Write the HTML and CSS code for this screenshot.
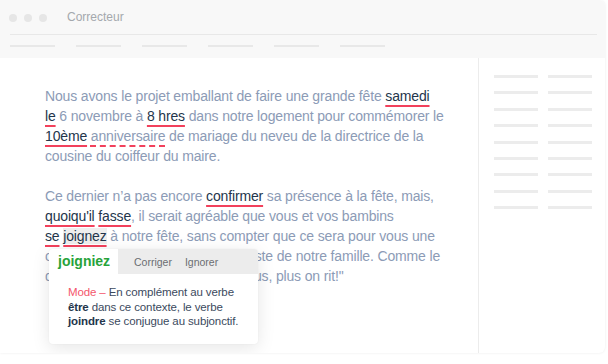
FILE: index.html
```html
<!DOCTYPE html>
<html lang="fr">
<head>
<meta charset="utf-8">
<title>Correcteur</title>
<link rel="stylesheet" href="styles.css">
</head>
<body>
<div class="window">
  <header class="titlebar">
    <div class="dots"><span class="dot"></span><span class="dot"></span><span class="dot"></span></div>
    <div class="title">Correcteur</div>
  </header>
  <div class="toolbar">
    <span class="tool"></span><span class="tool"></span><span class="tool"></span><span class="tool"></span><span class="tool"></span><span class="tool"></span>
  </div>
  <div class="body">
    <main class="editor">
      <p class="para">Nous avons le projet emballant de faire une grande fête <span class="err">samedi</span><br><span class="err">le</span> 6 novembre à <span class="err">8 hres</span> dans notre logement pour commémorer le<br><span class="err">10ème</span> <span class="warn">anniversaire</span> de mariage du neveu de la directrice de la<br>cousine du coiffeur du maire.</p>
      <p class="para">Ce dernier n’a pas encore <span class="err">confirmer</span> sa présence à la fête, mais,<br><span class="err">quoiqu'il</span> <span class="err">fasse</span>, il serait agréable que vous et vos bambins<br><span class="err">se</span> <span class="err sel">joignez</span> à notre fête, sans compter que ce sera pour vous une<br>occasion de connaître un peu le reste de notre famille. Comme le<br>dit un proverbe : "Plus on est de fous, plus on rit!"</p>
      <div class="popup">
        <div class="popup-head">
          <div class="suggest">joigniez</div>
          <div class="actions"><span class="action">Corriger</span><span class="action">Ignorer</span></div>
        </div>
        <div class="popup-text"><span class="tag">Mode –</span> En complément au verbe<br><b>être</b> dans ce contexte, le verbe<br><b>joindre</b> se conjugue au subjonctif.</div>
      </div>
    </main>
    <aside class="sidebar">
      <div class="row"><span></span><span></span></div>
      <div class="row"><span></span><span></span></div>
      <div class="row"><span></span><span></span></div>
      <div class="row"><span></span><span></span></div>
      <div class="row"><span></span><span></span></div>
      <div class="row"><span></span><span></span></div>
      <div class="row"><span></span><span></span></div>
      <div class="row"><span></span><span></span></div>
      <div class="row"><span></span><span></span></div>
    </aside>
  </div>
</div>
</body>
</html>
```
FILE: styles.css
```css
html, body {
  margin: 0;
  padding: 0;
  background: #ffffff;
}
body {
  font-family: "Liberation Sans", Arial, sans-serif;
  width: 608px;
  height: 364px;
  overflow: hidden;
}
.window {
  width: 605px;
  height: 353px;
  border-radius: 0 6px 6px 0;
  background: #ffffff;
  box-shadow: 0 0 3px rgba(0,0,0,0.08);
  display: flex;
  flex-direction: column;
  overflow: hidden;
}
.titlebar {
  background: #f8f8f8;
  height: 35px;
  margin: 0;
  display: flex;
  align-items: center;
  padding-left: 9px;
  box-sizing: border-box;
  position: relative;
}
.titlebar::after {
  content: "";
  position: absolute;
  left: 10px;
  right: 8px;
  bottom: 0;
  height: 1px;
  background: #e8e8e8;
}
.dots {
  display: flex;
  gap: 7px;
  width: 58px;
}
.dot {
  width: 8px;
  height: 8px;
  border-radius: 50%;
  background: #e6e6e6;
}
.title {
  font-size: 12px;
  color: #a4a8ad;
  margin-top: -1px;
}
.toolbar {
  background: #f8f8f8;
  height: 23px;
  display: flex;
  align-items: center;
  gap: 21px;
  padding-left: 10px;
  padding-bottom: 1px;
  box-sizing: border-box;
}
.tool {
  width: 45px;
  height: 2px;
  background: #e8e8e8;
}
.body {
  flex: 1;
  display: flex;
}
.editor {
  position: relative;
  width: 479px;
  border-right: 1px solid #ececec;
  padding: 28px 20px 0 45px;
  box-sizing: border-box;
  overflow: hidden;
}
.para {
  margin: 0 0 20px;
  font-size: 14px;
  letter-spacing: -0.15px;
  line-height: 20px;
  color: #8c9bb6;
  white-space: nowrap;
}
.err {
  color: #23354b;
  text-decoration: underline;
  text-decoration-color: #f2415c;
  text-decoration-thickness: 2px;
  text-underline-offset: 4px;
}
.warn {
  text-decoration: underline dashed;
  text-decoration-color: #f2415c;
  text-decoration-thickness: 1.5px;
  text-underline-offset: 4px;
}
.sel {
  background: #eeeeee;
}
.popup {
  position: absolute;
  left: 49px;
  top: 191px;
  width: 209px;
  background: #ffffff;
  border-radius: 4px;
  box-shadow: 0 4px 18px rgba(0,0,0,0.10), 0 0 2px rgba(0,0,0,0.05);
  overflow: hidden;
}
.popup-head {
  display: flex;
  height: 25px;
}
.suggest {
  width: 69px;
  padding-left: 9px;
  box-sizing: border-box;
  font-size: 14px;
  font-weight: bold;
  color: #27a33a;
  line-height: 25px;
}
.actions {
  flex: 1;
  background: #ececec;
  display: flex;
  align-items: center;
  gap: 13px;
  padding-left: 16px;
  font-size: 10.5px;
  color: #6b6e72;
}
.popup-text {
  padding: 11px 8px 15px 19px;
  font-size: 11.5px;
  letter-spacing: -0.12px;
  line-height: 14.5px;
  color: #3b4a5e;
  white-space: nowrap;
}
.popup-text b {
  color: #23354b;
}
.tag {
  color: #f4566c;
}
.sidebar {
  flex: 1;
  padding: 17px 0 0 15px;
  display: flex;
  flex-direction: column;
  gap: 13.4px;
}
.row {
  display: flex;
  gap: 10px;
}
.row span {
  width: 44px;
  height: 3px;
  background: #ececec;
}
```
